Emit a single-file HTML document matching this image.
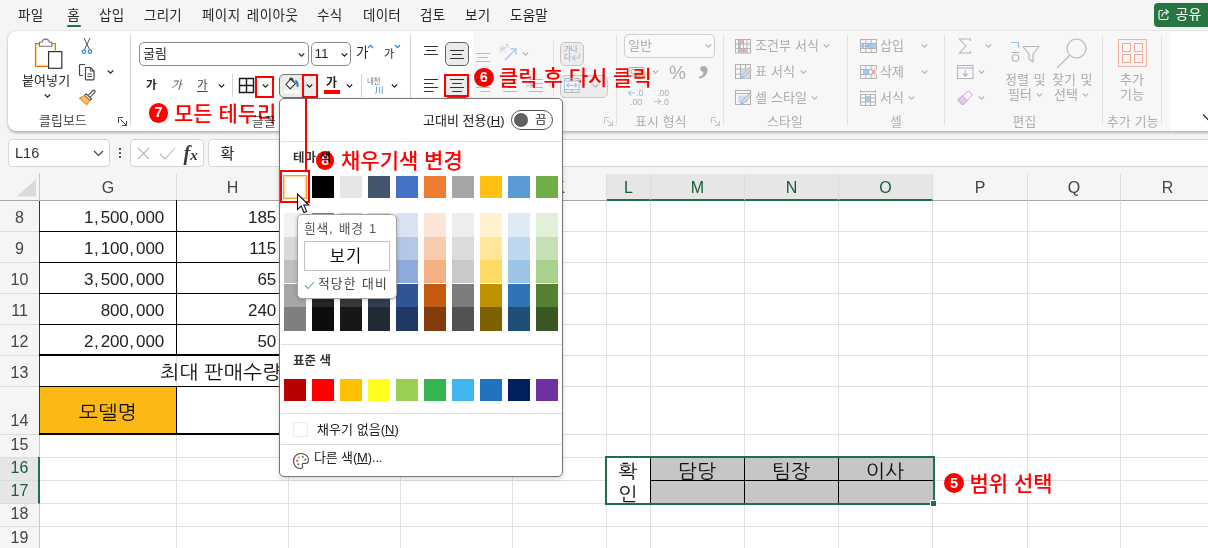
<!DOCTYPE html>
<html lang="ko">
<head>
<meta charset="utf-8">
<title>Excel</title>
<style>
*{box-sizing:border-box;margin:0;padding:0}
html,body{width:1208px;height:548px;overflow:hidden;background:#f5f5f5}
body{position:relative;font-family:"Liberation Sans","Noto Sans CJK KR",sans-serif;font-size:13px;color:#242424}
.abs{position:absolute}
.t{position:absolute;white-space:nowrap;line-height:1}
/* tabs */
#tabs .t{font-size:13.5px;top:8.6px;color:#262626;letter-spacing:.25px;word-spacing:2px}
/* ribbon */
#ribbon{position:absolute;left:8px;top:30.5px;width:1210px;height:100px;background:#fff;border-radius:8px;box-shadow:0 1.5px 3px rgba(0,0,0,.26),0 0 1px rgba(0,0,0,.2)}
.sep{position:absolute;width:1px;background:#d4d4d4}
.glabel{position:absolute;font-size:12.8px;letter-spacing:.2px;color:#444;white-space:nowrap;line-height:1}
.dim{color:#b4b4b4}
/* sheet */
#sheet{position:absolute;left:0;top:173px;width:1208px;height:375px;background:linear-gradient(#f5f5f5 0,#f5f5f5 27px,#fff 27px);overflow:hidden}
.ch{position:absolute;top:1px;height:27px;background:#f5f5f5;border-right:1px solid #dcdcdc;border-bottom:1px solid #a6a6a6;font-size:16px;color:#444;text-align:center;line-height:28.5px}
.ch.sel{background:#e6e6e6;color:#185c37;border-bottom:2px solid #1e7145}
.rh{position:absolute;left:0;width:40px;background:#f5f5f5;border-bottom:1px solid #dcdcdc;border-right:1px solid #c8c8c8;font-size:16px;color:#444;text-align:center}
.rh.sel{background:#e6e6e6;color:#185c37;border-right:2px solid #1e7145}
.vl{position:absolute;width:1px;background:#e1e1e1;top:27px;bottom:0}
.hl{position:absolute;height:1px;background:#e1e1e1;left:40px;right:0}
.cell{transform:scaleX(1.08);position:absolute;font-family:"NanumGothic","Noto Sans CJK KR",sans-serif;font-size:16px;color:#111;white-space:nowrap;line-height:1}
.bk{position:absolute;background:#000}
.num{transform:none;font-family:"Liberation Sans",sans-serif;font-size:17px;letter-spacing:-.15px;color:#222;margin-top:1.2px}
.cm{padding:0 2.2px 0 .7px}
.red{color:#ff0000;font-weight:500;font-family:"Liberation Sans","Noto Sans CJK KR",sans-serif}
.bd{border-radius:50%;background:#ff0000;color:#fff;font-weight:bold;font-size:14.5px;text-align:center;font-family:"Liberation Sans",sans-serif}
</style>
</head>
<body>
<!-- TAB BAR -->
<div id="tabs">
<span class="t" style="left:18px">파일</span>
<span class="t" style="left:67.3px">홈</span>
<div class="abs" style="left:67.3px;top:25.2px;width:13.5px;height:2px;background:#1e7145;border-radius:1px"></div>
<span class="t" style="left:99px">삽입</span>
<span class="t" style="left:144px">그리기</span>
<span class="t" style="left:202px;letter-spacing:.45px">페이지 레이아웃</span>
<span class="t" style="left:317px">수식</span>
<span class="t" style="left:363px">데이터</span>
<span class="t" style="left:420px">검토</span>
<span class="t" style="left:465px">보기</span>
<span class="t" style="left:510px">도움말</span>
</div>
<div class="abs" id="share" style="left:1154px;top:3px;width:70px;height:24px;background:#277641;border-radius:4px;color:#fff;font-size:14px;line-height:23px;padding-left:21.5px">공유</div>
<svg class="abs" style="left:1158px;top:8px" width="13" height="13" viewBox="0 0 13 13"><path d="M5 2.5 H2.500 a1.500 1.500 0 0 0 -1.500 1.500 V10 a1.500 1.500 0 0 0 1.500 1.500 H8.500 a1.500 1.500 0 0 0 1.500 -1.500 V8.500" fill="none" stroke="#fff" stroke-width="1.1"/><path d="M4 8.500 C4 5.500 6 4 9 4 M7.500 1.500 L10.500 4 L7.500 6.500" fill="none" stroke="#fff" stroke-width="1.1"/></svg>

<!-- RIBBON -->
<div id="ribbon">
<div class="abs" style="left:465px;top:0;width:697px;height:100px;background:#f7f7f7"></div>
</div>
<div id="rb" class="abs" style="left:0;top:0;width:1208px;height:135px">
<!-- CLIPBOARD -->
<svg class="abs" style="left:33px;top:37px" width="31" height="33" viewBox="0 0 31 33">
 <path d="M22.400 13.500 V6.500 H2.500 V29.400 H15" fill="none" stroke="#e06c0a" stroke-width="1.1"/>
 <path d="M21.300 13.500 V7.600 H3.600 V28.300 H15" fill="none" stroke="#fcd98a" stroke-width="1.2"/>
 <path d="M6.500 9.300 V5.300 H9 C9.500 1 15.800 1 16.300 5.300 H18.800 V9.300 Z" fill="#fff" stroke="#767676" stroke-width="1.1"/>
 <rect x="15.600" y="14.600" width="13.200" height="16.700" fill="#fff" stroke="#333" stroke-width="1.2"/>
</svg>
<span class="t" style="left:22px;top:74px;font-size:13px;letter-spacing:.1px">붙여넣기</span>
<svg class="abs chev" style="left:43px;top:93px" width="9" height="6" viewBox="0 0 9 6"><path d="M1.800 1.500 L4.500 4.200 L7.200 1.500" fill="none" stroke="#2a2a2a" stroke-width="1.250"/></svg>
<!-- scissors -->
<svg class="abs" style="left:80px;top:37px" width="14" height="18" viewBox="0 0 14 18">
 <path d="M4 1 L9.500 12.600 M10 1 L4.500 12.600" stroke="#555" stroke-width="1" fill="none"/>
 <circle cx="4" cy="14.600" r="1.700" fill="none" stroke="#2b8ad8" stroke-width="1.200"/>
 <circle cx="10" cy="14.600" r="1.700" fill="none" stroke="#2b8ad8" stroke-width="1.200"/>
</svg>
<!-- copy -->
<svg class="abs" style="left:78px;top:63px" width="18" height="18" viewBox="0 0 18 18">
 <path d="M5 12.5 H2.5 a1 1 0 0 1 -1 -1 V2.5 a1 1 0 0 1 1 -1 H7" fill="none" stroke="#444" stroke-width="1.2"/>
 <path d="M7.5 4.5 h5 l3.5 3.5 v8 a.8 .8 0 0 1 -.8 .8 h-7 a.8 .8 0 0 1 -.8 -.8 z" fill="#fff" stroke="#444" stroke-width="1.2"/>
 <path d="M12.3 4.7 v3.4 h3.5" fill="none" stroke="#444" stroke-width="1"/>
 <path d="M9.5 11 h4.5 M9.5 13.5 h4.5" stroke="#444" stroke-width="1"/>
</svg>
<svg class="abs chev" style="left:106px;top:69px" width="9" height="6" viewBox="0 0 9 6"><path d="M1.800 1.500 L4.500 4.200 L7.200 1.500" fill="none" stroke="#2a2a2a" stroke-width="1.250"/></svg>
<!-- format painter -->
<svg class="abs" style="left:78px;top:89px" width="18" height="17" viewBox="0 0 18 17">
 <path d="M10.5 6.2 L14.8 1.6 a1.3 1.3 0 0 1 1.9 1.8 L12.5 8" fill="#fff" stroke="#444" stroke-width="1.1"/>
 <path d="M8.2 4.8 L13.6 9.8 L12 11.4 L6.6 6.4 z" fill="#fff" stroke="#444" stroke-width="1.1"/>
 <path d="M6.3 6.6 L11.6 11.6 L8.6 15.6 L1.6 9.4 z" fill="#f7c27a" stroke="#e8912d" stroke-width="1.2"/>
</svg>
<span class="glabel" style="left:39px;top:114.5px">클립보드</span>
<svg class="abs" style="left:118px;top:117px" width="9" height="9" viewBox="0 0 9 9"><path d="M.5 6 V.5 H5 M2.5 2.5 L8 8 M8.5 4 V8.5 H4" fill="none" stroke="#444" stroke-width="1"/></svg>
<div class="sep" style="left:130px;top:35px;height:90px"></div>

<!-- FONT -->
<div class="abs" style="left:139px;top:42px;width:170px;height:24px;border:1px solid #8a8a8a;border-radius:5px;background:#fff"></div>
<span class="t" style="left:143px;top:47px;font-size:13px">굴림</span>
<svg class="abs chev" style="left:297px;top:52px" width="9" height="6" viewBox="0 0 9 6"><path d="M1.800 1.500 L4.500 4.200 L7.200 1.500" fill="none" stroke="#2a2a2a" stroke-width="1.250"/></svg>
<div class="abs" style="left:311px;top:42px;width:40px;height:24px;border:1px solid #8a8a8a;border-radius:5px;background:#fff"></div>
<span class="t" style="left:314.5px;top:47px;font-size:13.5px;letter-spacing:0">11</span>
<svg class="abs chev" style="left:340px;top:52px" width="9" height="6" viewBox="0 0 9 6"><path d="M1.800 1.500 L4.500 4.200 L7.200 1.500" fill="none" stroke="#2a2a2a" stroke-width="1.250"/></svg>
<span class="t" style="left:356px;top:46px;font-size:13.5px">가</span>
<svg class="abs" style="left:367px;top:44px" width="7" height="5" viewBox="0 0 7 5"><path d="M1 4 L3.5 1.3 L6 4" fill="none" stroke="#2b7cd3" stroke-width="1.2"/></svg>
<span class="t" style="left:384px;top:49px;font-size:11px">가</span>
<svg class="abs" style="left:394px;top:44px" width="7" height="5" viewBox="0 0 7 5"><path d="M1 1 L3.5 3.7 L6 1" fill="none" stroke="#2b7cd3" stroke-width="1.2"/></svg>

<span class="t" style="left:146px;top:80px;font-size:11.5px;font-weight:bold">가</span>
<span class="t" style="left:171px;top:80px;font-size:11.5px;font-style:italic;color:#555">가</span>
<span class="t" style="left:197px;top:80px;font-size:11.5px;color:#444;text-decoration:underline;text-underline-offset:2px">가</span>
<svg class="abs chev" style="left:217px;top:83px" width="9" height="6" viewBox="0 0 9 6"><path d="M1.800 1.500 L4.500 4.200 L7.200 1.500" fill="none" stroke="#2a2a2a" stroke-width="1.250"/></svg>
<div class="sep" style="left:232px;top:74px;height:23px"></div>
<svg class="abs" style="left:238px;top:77px" width="17" height="17" viewBox="0 0 17 17"><path d="M1.5 1.5 H15.5 V15.5 H1.5 Z M8.5 1.5 V15.5 M1.5 8.5 H15.5" fill="none" stroke="#1a1a1a" stroke-width="1.4"/></svg>
<svg class="abs chev" style="left:261px;top:83px" width="9" height="6" viewBox="0 0 9 6"><path d="M1.800 1.500 L4.500 4.200 L7.200 1.500" fill="none" stroke="#2a2a2a" stroke-width="1.250"/></svg>
<!-- fill button -->
<div class="abs" style="left:279px;top:74px;width:39px;height:24px;border:1px solid #757575;border-radius:5px;background:#ececec"></div>
<svg class="abs" style="left:284px;top:76px" width="17" height="19" viewBox="0 0 17 19">
 <path d="M6.8 3 L11.4 7.7 L6.2 12.8 L1.9 8.4 Z" fill="#fff" stroke="#333" stroke-width="1.1" stroke-linejoin="round"/>
 <path d="M5.6 4.4 C5.2 2.2 7.8 1.2 8.6 3.2 L9.6 5.8" fill="none" stroke="#333" stroke-width="1.1"/>
 <path d="M11.3 4.6 c2 1.2 2.6 3.4 2.1 6.2" fill="none" stroke="#2b6fc4" stroke-width="1.9"/>
 <rect x="-.8" y="14" width="16" height="3.6" fill="#fff"/>
</svg>
<svg class="abs chev" style="left:305px;top:83px" width="9" height="6" viewBox="0 0 9 6"><path d="M1.800 1.500 L4.500 4.200 L7.200 1.500" fill="none" stroke="#2a2a2a" stroke-width="1.250"/></svg>
<span class="t" style="left:326px;top:77px;font-size:12px;font-weight:bold">가</span>
<div class="abs" style="left:324px;top:90px;width:16px;height:4px;background:#ff0000"></div>
<svg class="abs chev" style="left:345px;top:83px" width="9" height="6" viewBox="0 0 9 6"><path d="M1.800 1.500 L4.500 4.200 L7.200 1.500" fill="none" stroke="#2a2a2a" stroke-width="1.250"/></svg>
<div class="sep" style="left:361px;top:74px;height:23px"></div>
<span class="t" style="left:367px;top:78px;font-size:7.5px;color:#777;letter-spacing:-.3px">내천</span>
<span class="t" style="left:375px;top:86px;font-size:8.5px;color:#2b7cd3">川</span>
<svg class="abs chev" style="left:390px;top:83px" width="9" height="6" viewBox="0 0 9 6"><path d="M1.800 1.500 L4.500 4.200 L7.200 1.500" fill="none" stroke="#2a2a2a" stroke-width="1.250"/></svg>
<span class="glabel" style="left:252px;top:116px">글꼴</span>
<div class="sep" style="left:410px;top:35px;height:90px"></div>
<!-- ALIGN -->
<svg class="abs" style="left:424px;top:46px" width="14" height="9" viewBox="0 0 14 9"><path d="M0 0.5 H14 M2 4.5 H12 M0 8.5 H14" stroke="#333" stroke-width="1.1" fill="none"/></svg>
<div class="abs" style="left:445px;top:42px;width:24px;height:24px;border:1px solid #616161;border-radius:5px;background:#ebebeb"></div>
<svg class="abs" style="left:450px;top:49.5px" width="14" height="9" viewBox="0 0 14 9"><path d="M0 0.5 H14 M2 4.5 H12 M0 8.5 H14" stroke="#333" stroke-width="1.1" fill="none"/></svg>
<svg class="abs" style="left:476px;top:53px" width="14" height="9" viewBox="0 0 14 9"><path d="M0 0.5 H14 M2 4.5 H12 M0 8.5 H14" stroke="#b9b9b9" stroke-width="1.1" fill="none"/></svg>
<svg class="abs" style="left:500px;top:44px" width="18" height="18" viewBox="0 0 18 18"><path d="M5 16 L15.5 5.5 M10.5 5 H16 V10.5" fill="none" stroke="#a9c8ea" stroke-width="1.3"/><text x="0" y="8" font-size="6.5" fill="#aaa" transform="rotate(-40 3 8)" font-family="Liberation Sans,Noto Sans CJK KR,sans-serif">가나</text></svg>
<svg class="abs" style="left:521.0px;top:51px" width="9" height="6" viewBox="0 0 9 6"><path d="M1.800 1.500 L4.500 4.200 L7.200 1.500" fill="none" stroke="#b9b9b9" stroke-width="1.250"/></svg>
<div class="sep" style="left:553px;top:41px;height:55px;background:#e3e3e3"></div>
<div class="abs" style="left:560px;top:42px;width:24px;height:24px;border:1px solid #c4c4c4;border-radius:5px;background:#ececec"></div>
<span class="t" style="left:564px;top:46px;font-size:7.5px;color:#a0a0a0;letter-spacing:-.2px">가나</span><span class="t" style="left:564px;top:54px;font-size:7.5px;color:#a0a0a0">다</span>
<svg class="abs" style="left:571px;top:53px" width="10" height="9" viewBox="0 0 10 9"><path d="M8.5 .5 V3 a2 2 0 0 1 -2 2 H1.5 M4 2.5 L1.5 5 L4 7.5" fill="none" stroke="#a9c8ea" stroke-width="1.2"/></svg>
<svg class="abs" style="left:424px;top:79px" width="14" height="13" viewBox="0 0 14 13"><path d="M0 0.5 H14 M0 4.5 H9.5 M0 8.5 H14 M0 12.5 H9.5" stroke="#333" stroke-width="1.1" fill="none"/></svg>
<div class="abs" style="left:445px;top:75px;width:24px;height:23px;background:#ebebeb;border-bottom:1px solid #616161;border-radius:0 0 4px 4px"></div>
<svg class="abs" style="left:450px;top:79px" width="14" height="13" viewBox="0 0 14 13"><path d="M0 0.5 H14 M2.2 4.5 H11.8 M0 8.5 H14 M2.2 12.5 H11.8" stroke="#333" stroke-width="1.1" fill="none"/></svg>
<svg class="abs" style="left:476px;top:79px" width="14" height="13" viewBox="0 0 14 13"><path d="M0 0.5 H14 M4.5 4.5 H14 M0 8.5 H14 M4.5 12.5 H14" stroke="#b9b9b9" stroke-width="1.1" fill="none"/></svg>
<svg class="abs" style="left:503px;top:79px" width="14" height="13" viewBox="0 0 14 13"><path d="M0 0.5 H14 M5 4.5 H14 M5 8.5 H14 M0 12.5 H14" stroke="#b9b9b9" stroke-width="1.1" fill="none"/></svg>
<svg class="abs" style="left:529px;top:79px" width="14" height="13" viewBox="0 0 14 13"><path d="M0 0.5 H14 M5 4.5 H14 M5 8.5 H14 M0 12.5 H14" stroke="#b9b9b9" stroke-width="1.1" fill="none"/></svg>
<svg class="abs" style="left:526px;top:82px" width="8" height="7" viewBox="0 0 8 7"><path d="M0 3.5 H6 M4 1 L6.5 3.5 L4 6" fill="none" stroke="#a9c8ea" stroke-width="1.1"/></svg>
<div class="abs" style="left:560px;top:75px;width:48px;height:23px;border:1px solid #c9c9c9;border-radius:5px;background:#ececec"></div>

<svg class="abs" style="left:590.5px;top:83px" width="9" height="6" viewBox="0 0 9 6"><path d="M1.800 1.500 L4.500 4.200 L7.200 1.500" fill="none" stroke="#b9b9b9" stroke-width="1.250"/></svg>
<svg class="abs" style="left:604px;top:117px" width="9" height="9" viewBox="0 0 9 9"><path d="M.5 6 V.5 H5 M2.5 2.5 L8 8 M8.5 4 V8.5 H4" fill="none" stroke="#c2c2c2" stroke-width="1"/></svg>
<div class="sep" style="left:616px;top:35px;height:90px;background:#e3e3e3"></div>
<svg class="abs" style="left:636px;top:70px" width="11" height="9" viewBox="0 0 11 9"><ellipse cx="5.500" cy="4.500" rx="4.500" ry="3.500" fill="#f6d9a8" stroke="#e9b96c" stroke-width=".8"/></svg>
<!-- NUMBER -->
<div class="abs" style="left:624px;top:34px;width:91px;height:24px;border:1px solid #cfcfcf;border-radius:5px;background:#f9f9f9"></div>
<span class="t" style="left:628px;top:39px;font-size:13px;color:#adadad">일반</span>
<svg class="abs" style="left:704.0px;top:43px" width="9" height="6" viewBox="0 0 9 6"><path d="M1.800 1.500 L4.500 4.200 L7.200 1.500" fill="none" stroke="#b9b9b9" stroke-width="1.250"/></svg>

<svg class="abs" style="left:650.5px;top:69px" width="9" height="6" viewBox="0 0 9 6"><path d="M1.800 1.500 L4.500 4.200 L7.200 1.500" fill="none" stroke="#b9b9b9" stroke-width="1.250"/></svg>
<span class="t" style="left:669px;top:63px;font-size:19px;color:#adadad">%</span>
<span class="t" style="left:698.5px;top:36px;font-size:43px;color:#adadad;font-family:'Liberation Serif',serif;font-weight:bold">,</span>
<svg class="abs" style="left:627px;top:89px" width="18" height="17" viewBox="0 0 18 17"><path d="M1.5 4 H8 M4 1.5 L1.5 4 L4 6.5" fill="none" stroke="#a9c8ea" stroke-width="1.1"/><text x="9" y="7" font-size="8.8" fill="#adadad" font-family="Liberation Sans,sans-serif">.0</text><text x="3" y="15.5" font-size="8.8" fill="#adadad" font-family="Liberation Sans,sans-serif">.00</text></svg>
<svg class="abs" style="left:653px;top:89px" width="18" height="17" viewBox="0 0 18 17"><text x="4" y="7" font-size="8.8" fill="#adadad" font-family="Liberation Sans,sans-serif">.00</text><path d="M1 12.5 H7.5 M5 10 L7.5 12.5 L5 15" fill="none" stroke="#a9c8ea" stroke-width="1.1"/><text x="8.5" y="15.5" font-size="8.8" fill="#adadad" font-family="Liberation Sans,sans-serif">.0</text></svg>
<span class="glabel" style="left:635px;top:115.5px;color:#adadad">표시 형식</span>
<svg class="abs" style="left:711px;top:117px" width="9" height="9" viewBox="0 0 9 9"><path d="M.5 6 V.5 H5 M2.5 2.5 L8 8 M8.5 4 V8.5 H4" fill="none" stroke="#c2c2c2" stroke-width="1"/></svg>
<div class="sep" style="left:723px;top:35px;height:90px;background:#e3e3e3"></div>
<!-- STYLES -->
<svg class="abs" style="left:735px;top:38.500px" width="17" height="15" viewBox="0 0 17 15"><rect x="3.800" y="1" width="4.700" height="3.800" fill="#f4a9b0"/><rect x="3.800" y="5" width="2" height="4.500" fill="#9cc3ee"/><rect x="3.800" y="9.700" width="8" height="3.800" fill="#f4a9b0"/><rect x=".5" y=".5" width="15" height="13.500" fill="none" stroke="#b3b3b3"/><path d="M3.500 .5 V14 M8.500 .5 V14 M12 .5 V14 M.5 5 H15.500 M.5 9.500 H15.500" stroke="#b3b3b3" fill="none"/></svg>
<span class="t" style="left:755px;top:39px;font-size:13px;color:#adadad;letter-spacing:0;word-spacing:.5px">조건부 서식</span>
<svg class="abs" style="left:822.0px;top:43px" width="9" height="6" viewBox="0 0 9 6"><path d="M1.800 1.500 L4.500 4.200 L7.200 1.500" fill="none" stroke="#b9b9b9" stroke-width="1.250"/></svg>
<svg class="abs" style="left:735px;top:64px" width="17" height="16" viewBox="0 0 17 16"><rect x=".5" y=".5" width="15" height="14" fill="none" stroke="#b0b0b0"/><path d="M.5 5 H15.5 M.5 10 H15.5 M5.5 .5 V14.5 M10.5 .5 V14.5" stroke="#b0b0b0" fill="none"/><rect x="6" y="5.5" width="9" height="9" fill="#c9dcf2"/><path d="M14.5 3.5 L7 11 L5 14.8 L9 13 L16.3 5.5 Z" fill="#dcdcdc" stroke="#a8a8a8" stroke-width=".8"/><path d="M5 15 q2 .8 4 -1.8 l-2 -2 q-2.4 1.2 -2 3.8z" fill="#9cc3ee"/></svg>
<span class="t" style="left:755px;top:65px;font-size:13px;color:#adadad;letter-spacing:0;word-spacing:.5px">표 서식</span>
<svg class="abs" style="left:798.5px;top:69px" width="9" height="6" viewBox="0 0 9 6"><path d="M1.800 1.500 L4.500 4.200 L7.200 1.500" fill="none" stroke="#b9b9b9" stroke-width="1.250"/></svg>
<svg class="abs" style="left:735px;top:90px" width="17" height="16" viewBox="0 0 17 16"><rect x=".5" y=".5" width="15" height="14" fill="none" stroke="#b0b0b0"/><path d="M.5 3.5 H15.5" stroke="#b0b0b0"/><rect x="3" y="5.5" width="10" height="7" fill="#c9dcf2"/><path d="M14.5 3.5 L7 11 L5 14.8 L9 13 L16.3 5.5 Z" fill="#dcdcdc" stroke="#a8a8a8" stroke-width=".8"/><path d="M5 15 q2 .8 4 -1.8 l-2 -2 q-2.4 1.2 -2 3.8z" fill="#9cc3ee"/></svg>
<span class="t" style="left:755px;top:91px;font-size:13px;color:#adadad;letter-spacing:0;word-spacing:.5px">셀 스타일</span>
<svg class="abs" style="left:810.0px;top:95px" width="9" height="6" viewBox="0 0 9 6"><path d="M1.800 1.500 L4.500 4.200 L7.200 1.500" fill="none" stroke="#b9b9b9" stroke-width="1.250"/></svg>
<span class="glabel" style="left:767px;top:115.5px;color:#adadad">스타일</span>
<div class="sep" style="left:847px;top:35px;height:90px;background:#e3e3e3"></div>
<!-- CELLS -->
<svg class="abs" style="left:859.5px;top:39px" width="17" height="14" viewBox="0 0 17 14"><rect x=".5" y=".5" width="16" height="13" fill="none" stroke="#b3b3b3"/><path d="M5.800 .5 V13.500 M11.100 .5 V13.500 M.5 4.500 H16.500 M.5 9.500 H16.500" stroke="#b3b3b3" fill="none"/><rect x="6.300" y="5" width="9.700" height="4" fill="#a9c8ea"/><path d="M10 7 H1.500 M3.800 4.800 L1.500 7 L3.800 9.200" fill="none" stroke="#7fb0e6" stroke-width="1.1"/></svg>
<span class="t" style="left:880px;top:39px;font-size:13px;color:#adadad">삽입</span>
<svg class="abs" style="left:920.0px;top:43px" width="9" height="6" viewBox="0 0 9 6"><path d="M1.800 1.500 L4.500 4.200 L7.200 1.500" fill="none" stroke="#b9b9b9" stroke-width="1.250"/></svg>
<svg class="abs" style="left:859.5px;top:65px" width="17" height="14" viewBox="0 0 17 14"><path d="M.5 .5 H16.500 M.5 13.500 H16.500 M.5 .5 V13.500 M5.800 .5 V13.500 M11.100 .5 V4 M11.100 10 V13.500 M16.500 .5 V4 M16.500 10 V13.500 M.5 4.500 H11 M.5 9.500 H11" stroke="#b3b3b3" fill="none"/><rect x="3.500" y="4.500" width="5.500" height="5" fill="#a9c8ea" stroke="#8fb8e6" stroke-width=".8"/><path d="M11.300 4.300 L16 9.700 M16 4.300 L11.300 9.700" stroke="#f08a86" stroke-width="1.200"/></svg>
<span class="t" style="left:880px;top:65px;font-size:13px;color:#adadad">삭제</span>
<svg class="abs" style="left:920.0px;top:69px" width="9" height="6" viewBox="0 0 9 6"><path d="M1.800 1.500 L4.500 4.200 L7.200 1.500" fill="none" stroke="#b9b9b9" stroke-width="1.250"/></svg>
<svg class="abs" style="left:860px;top:90px" width="17" height="16" viewBox="0 0 17 16"><path d="M.5 .300 V3 M15.500 .300 V3 M.5 1.600 H15.500" stroke="#8fb8e6" fill="none"/><rect x=".5" y="4.500" width="15" height="11" fill="none" stroke="#b3b3b3"/><path d="M5.500 4.500 V15.500 M10.500 4.500 V15.500 M.5 8 H15.500 M.5 12 H15.500" stroke="#b3b3b3" fill="none"/><rect x="6" y="6" width="4" height="5.500" fill="#a9c8ea"/></svg>
<span class="t" style="left:880px;top:91px;font-size:13px;color:#adadad">서식</span>
<svg class="abs" style="left:907.0px;top:95px" width="9" height="6" viewBox="0 0 9 6"><path d="M1.800 1.500 L4.500 4.200 L7.200 1.500" fill="none" stroke="#b9b9b9" stroke-width="1.250"/></svg>
<span class="glabel" style="left:890px;top:115.5px;color:#adadad">셀</span>
<div class="sep" style="left:944px;top:35px;height:90px;background:#e3e3e3"></div>
<!-- EDIT -->
<svg class="abs" style="left:958px;top:38px" width="14" height="16" viewBox="0 0 14 16"><path d="M12.5 3 V1 H1.5 L8 8 L1.5 15 H12.5 V13" fill="none" stroke="#b5b5b5" stroke-width="1.1"/></svg>
<svg class="abs" style="left:983.5px;top:43px" width="9" height="6" viewBox="0 0 9 6"><path d="M1.800 1.500 L4.500 4.200 L7.200 1.500" fill="none" stroke="#b9b9b9" stroke-width="1.250"/></svg>
<svg class="abs" style="left:957px;top:65px" width="17" height="14" viewBox="0 0 17 14"><rect x=".5" y=".5" width="15.500" height="13" fill="none" stroke="#b3b3b3"/><path d="M.5 3 H16" stroke="#b3b3b3"/><path d="M8.300 5 V11 M5.800 8.700 L8.300 11.200 L10.800 8.700" fill="none" stroke="#8fbce9" stroke-width="1.1"/></svg>
<svg class="abs" style="left:977.0px;top:69px" width="9" height="6" viewBox="0 0 9 6"><path d="M1.800 1.500 L4.500 4.200 L7.200 1.500" fill="none" stroke="#b9b9b9" stroke-width="1.250"/></svg>
<svg class="abs" style="left:957px;top:90px" width="17" height="16" viewBox="0 0 17 16"><path d="M11.500 .8 L15.400 4.800 L5.700 15 L.7 10 Z" fill="#fbf3fc" stroke="#cfa3da" stroke-width="1" stroke-linejoin="round"/><path d="M5.300 5.700 L10.300 10.600 L5.700 15 L.7 10 Z" fill="#e6c9ec" stroke="#cfa3da" stroke-width="1" stroke-linejoin="round"/></svg>
<svg class="abs" style="left:977.0px;top:95px" width="9" height="6" viewBox="0 0 9 6"><path d="M1.800 1.500 L4.500 4.200 L7.200 1.500" fill="none" stroke="#b9b9b9" stroke-width="1.250"/></svg>
<svg class="abs" style="left:1009px;top:41px" width="31" height="24" viewBox="0 0 31 24"><path d="M2 1.5 H9.5 V7" fill="none" stroke="#9cc3ee" stroke-width="1.2"/><circle cx="6.5" cy="17" r="3.3" fill="none" stroke="#b5b5b5" stroke-width="1.1"/><path d="M2.5 11.5 H10.5" stroke="#b5b5b5" stroke-width="1.1"/><path d="M14 5.5 H30 L24 13 V21 L20 18 V13 Z" fill="none" stroke="#b5b5b5" stroke-width="1.1" stroke-linejoin="round"/></svg>
<span class="t" style="left:1005px;top:73px;font-size:13px;color:#adadad;word-spacing:1px">정렬 및</span>
<span class="t" style="left:1008px;top:88px;font-size:13px;color:#adadad">필터</span>
<svg class="abs" style="left:1034.5px;top:92px" width="9" height="6" viewBox="0 0 9 6"><path d="M1.800 1.500 L4.500 4.200 L7.200 1.500" fill="none" stroke="#b9b9b9" stroke-width="1.250"/></svg>
<svg class="abs" style="left:1056px;top:38px" width="32" height="31" viewBox="0 0 32 31"><circle cx="20.5" cy="10.5" r="9.5" fill="none" stroke="#b5b5b5" stroke-width="1.1"/><path d="M13.5 17.5 L1 30" stroke="#b5b5b5" stroke-width="1.1"/></svg>
<span class="t" style="left:1052px;top:73px;font-size:13px;color:#adadad;word-spacing:1px">찾기 및</span>
<span class="t" style="left:1054px;top:88px;font-size:13px;color:#adadad">선택</span>
<svg class="abs" style="left:1081.0px;top:92px" width="9" height="6" viewBox="0 0 9 6"><path d="M1.800 1.500 L4.500 4.200 L7.200 1.500" fill="none" stroke="#b9b9b9" stroke-width="1.250"/></svg>
<span class="glabel" style="left:1012.5px;top:115.5px;color:#adadad">편집</span>
<div class="sep" style="left:1102px;top:35px;height:90px;background:#e3e3e3"></div>
<!-- ADDINS -->
<svg class="abs" style="left:1118px;top:39px" width="29" height="28" viewBox="0 0 29 28"><rect x=".5" y=".5" width="28" height="27" fill="none" stroke="#f0b5a3" stroke-width="1.1"/><rect x="4.500" y="4.500" width="8" height="8" fill="none" stroke="#eeaa96" stroke-width="1"/><rect x="16.500" y="4.500" width="8" height="8" fill="none" stroke="#eeaa96" stroke-width="1"/><rect x="4.500" y="15.500" width="8" height="8" fill="none" stroke="#eeaa96" stroke-width="1"/><rect x="16.500" y="15.500" width="8" height="8" fill="none" stroke="#eeaa96" stroke-width="1"/></svg>
<span class="t" style="left:1120px;top:73px;font-size:13px;color:#adadad">추가</span>
<span class="t" style="left:1120px;top:88px;font-size:13px;color:#adadad">기능</span>
<span class="glabel" style="left:1107px;top:115.5px;color:#adadad">추가 기능</span>
<div class="sep" style="left:1161px;top:35px;height:90px;background:#e3e3e3"></div>
<svg class="abs" style="left:1202px;top:112.500px" width="12" height="10" viewBox="0 0 12 10"><path d="M1 1.5 L8 8.5 L15 1.5" fill="none" stroke="#333" stroke-width="1.3"/></svg>

</div>

<!-- FORMULA BAR -->
<div id="fbar">
<div class="abs" style="left:8px;top:139px;width:102px;height:28px;background:#fff;border:1px solid #d6d6d6;border-radius:4px"></div>
<span class="t" style="left:15px;top:146px;font-size:14.5px;color:#333">L16</span>
<svg class="abs" style="left:93px;top:150px" width="11" height="7" viewBox="0 0 11 7"><path d="M1 1 L5.5 5.5 L10 1" fill="none" stroke="#444" stroke-width="1.2"/></svg>
<div class="abs" style="left:119px;top:148px;width:2px;height:2px;background:#555;box-shadow:0 4px 0 #555,0 8px 0 #555"></div>
<div class="abs" style="left:130px;top:139px;width:74px;height:28px;background:#fff;border:1px solid #d6d6d6;border-radius:4px"></div>
<svg class="abs" style="left:137px;top:147px" width="13" height="13" viewBox="0 0 13 13"><path d="M1 1 L12 12 M12 1 L1 12" stroke="#b8b8b8" stroke-width="1.1"/></svg>
<svg class="abs" style="left:159px;top:147px" width="17" height="13" viewBox="0 0 17 13"><path d="M1 7 L6 12 L16 1" fill="none" stroke="#b8b8b8" stroke-width="1.1"/></svg>
<span class="t" style="left:183.5px;top:142.5px;font-size:20px;font-style:italic;font-weight:bold;font-family:'Liberation Serif',serif;color:#3a3a3a">f<span style="font-size:15px">x</span></span>
<div class="abs" style="left:208px;top:139px;width:1010px;height:28px;background:#fff;border:1px solid #d6d6d6;border-radius:4px"></div>
<span class="t" style="left:220.5px;top:145.5px;font-size:15px;color:#222">확</span>
</div>

<!-- SHEET -->
<div id="sheet">
<div class="hl" style="top:58px"></div><div class="hl" style="top:89px"></div><div class="hl" style="top:120px"></div><div class="hl" style="top:151px"></div><div class="hl" style="top:182px"></div><div class="hl" style="top:213px"></div><div class="hl" style="top:261px"></div><div class="hl" style="top:284px"></div><div class="hl" style="top:307px"></div><div class="hl" style="top:330px"></div><div class="hl" style="top:353px"></div><div class="hl" style="top:376px"></div>
<div class="vl" style="left:176px"></div><div class="vl" style="left:288px"></div><div class="vl" style="left:400px"></div><div class="vl" style="left:512px"></div><div class="vl" style="left:606px"></div><div class="vl" style="left:650px"></div><div class="vl" style="left:744px"></div><div class="vl" style="left:838px"></div><div class="vl" style="left:932px"></div><div class="vl" style="left:1027px"></div><div class="vl" style="left:1120px"></div><div class="vl" style="left:1214px"></div>
<div class="abs" style="left:0;top:0;width:40px;height:28px;background:#f5f5f5;border-bottom:1px solid #a6a6a6;border-right:1px solid #c8c8c8"></div><svg class="abs" style="left:17px;top:6px" width="20" height="18" viewBox="0 0 20 18"><path d="M19 0 V17.5 H0 Z" fill="#dadada"/></svg>
<div class="ch" style="left:40px;width:137px">G</div><div class="ch" style="left:177px;width:112px">H</div><div class="ch" style="left:289px;width:112px">I</div><div class="ch" style="left:401px;width:112px">J</div><div class="ch" style="left:513px;width:94px">K</div><div class="ch sel" style="left:607px;width:44px">L</div><div class="ch sel" style="left:651px;width:94px">M</div><div class="ch sel" style="left:745px;width:94px">N</div><div class="ch sel" style="left:839px;width:94px">O</div><div class="ch" style="left:933px;width:95px">P</div><div class="ch" style="left:1028px;width:93px">Q</div><div class="ch" style="left:1121px;width:94px">R</div>
<div class="rh" style="top:28px;height:31px"><span class="t" style="left:0;width:39px;text-align:center;top:9.3px">8</span></div><div class="rh" style="top:59px;height:31px"><span class="t" style="left:0;width:39px;text-align:center;top:9.3px">9</span></div><div class="rh" style="top:90px;height:31px"><span class="t" style="left:0;width:39px;text-align:center;top:9.3px">10</span></div><div class="rh" style="top:121px;height:31px"><span class="t" style="left:0;width:39px;text-align:center;top:9.3px">11</span></div><div class="rh" style="top:152px;height:31px"><span class="t" style="left:0;width:39px;text-align:center;top:9.3px">12</span></div><div class="rh" style="top:183px;height:31px"><span class="t" style="left:0;width:39px;text-align:center;top:9.3px">13</span></div><div class="rh" style="top:214px;height:48px"><span class="t" style="left:0;width:39px;text-align:center;top:26.3px">14</span></div><div class="rh" style="top:262px;height:23px"><span class="t" style="left:0;width:39px;text-align:center;top:2.3px">15</span></div><div class="rh sel" style="top:285px;height:23px"><span class="t" style="left:0;width:39px;text-align:center;top:2.3px">16</span></div><div class="rh sel" style="top:308px;height:23px"><span class="t" style="left:0;width:39px;text-align:center;top:2.3px">17</span></div><div class="rh" style="top:331px;height:23px"><span class="t" style="left:0;width:39px;text-align:center;top:2.3px">18</span></div><div class="rh" style="top:354px;height:23px"><span class="t" style="left:0;width:39px;text-align:center;top:3.3px">19</span></div>
<div class="abs" style="left:38px;top:284px;width:2px;height:46px;background:#1e7145"></div><div class="bk" style="left:39px;top:28px;width:1px;height:234px;background:#333"></div><div class="bk" style="left:176px;top:27px;width:1px;height:156px"></div><div class="bk" style="left:176px;top:213px;width:1px;height:48px"></div><div class="bk" style="left:39px;top:58px;width:260px;height:1px"></div><div class="bk" style="left:39px;top:89px;width:260px;height:1px"></div><div class="bk" style="left:39px;top:120px;width:260px;height:1px"></div><div class="bk" style="left:39px;top:151px;width:260px;height:1px"></div><div class="bk" style="left:39px;top:181px;width:260px;height:2px"></div><div class="bk" style="left:39px;top:213px;width:260px;height:1px"></div><div class="bk" style="left:39px;top:260px;width:260px;height:2px"></div>
<div class="abs" style="left:40px;top:214px;width:136px;height:46px;background:#fdb913"></div>
<span class="cell num" style="right:1044px;top:35px">1<span class="cm">,</span>500<span class="cm">,</span>000</span><span class="cell num" style="right:932px;top:35px">185</span>
<span class="cell num" style="right:1044px;top:66px">1<span class="cm">,</span>100<span class="cm">,</span>000</span><span class="cell num" style="right:932px;top:66px">115</span>
<span class="cell num" style="right:1044px;top:97px">3<span class="cm">,</span>500<span class="cm">,</span>000</span><span class="cell num" style="right:932px;top:97px">65</span>
<span class="cell num" style="right:1044px;top:128px">800<span class="cm">,</span>000</span><span class="cell num" style="right:932px;top:128px">240</span>
<span class="cell num" style="right:1044px;top:159px">2<span class="cm">,</span>200<span class="cm">,</span>000</span><span class="cell num" style="right:932px;top:159px">50</span>
<span class="cell" style="left:160px;top:190px;font-size:19px;transform-origin:0 0">최대 판매수량</span>
<span class="cell" style="left:81px;top:230px;font-size:19px">모델명</span>
<div class="abs" style="left:607px;top:285px;width:43px;height:46px;background:#fff"></div><div class="abs" style="left:651px;top:285px;width:282px;height:46px;background:#c6c6c6"></div>
<div class="bk" style="left:650px;top:285px;width:1px;height:46px"></div><div class="bk" style="left:744px;top:285px;width:1px;height:46px"></div><div class="bk" style="left:838px;top:285px;width:1px;height:46px"></div><div class="bk" style="left:650px;top:307px;width:283px;height:1px"></div><div class="bk" style="left:607px;top:284px;width:326px;height:1px"></div><div class="bk" style="left:607px;top:330px;width:326px;height:1px"></div><span class="cell" style="left:618.5px;top:288.5px;font-size:19px">확</span><span class="cell" style="left:618.5px;top:311.5px;font-size:19px">인</span>
<span class="cell" style="left:678px;width:38px;text-align:center;top:288.5px;font-size:19px">담당</span><span class="cell" style="left:772px;width:38px;text-align:center;top:288.5px;font-size:19px">팀장</span><span class="cell" style="left:866px;width:38px;text-align:center;top:288.5px;font-size:19px">이사</span>
<div class="abs" style="left:605px;top:283px;width:330px;height:49px;border:2px solid #1e7145"></div><div class="abs" style="left:930px;top:327px;width:7px;height:7px;background:#1e7145;border:1px solid #fff"></div>
</div>

<!-- POPUP -->
<div id="popup" class="abs" style="left:279px;top:98px;width:284px;height:379px;background:#fff;border:1px solid #767676;border-radius:5px;box-shadow:0 2px 5px rgba(0,0,0,.16)">
<div class="abs" style="left:1px;top:0;width:0;height:0">
<span class="t" style="left:142px;top:15px;font-size:13px;color:#222;letter-spacing:0">고대비 전용(<u>H</u>)</span>
<div class="abs" style="left:230px;top:11px;width:42px;height:20px;border:1px solid #555;border-radius:10px"></div><div class="abs" style="left:233px;top:14px;width:14px;height:14px;border-radius:7px;background:#616161"></div><span class="t" style="left:254px;top:15px;font-size:12.5px;color:#333">끔</span>
<div class="abs" style="left:0px;top:42px;width:281px;height:1px;background:#e0e0e0"></div>
<span class="t" style="left:12px;top:53px;font-size:12.5px;font-weight:bold;color:#333">테마 색</span>
<div class="abs" style="left:2px;top:76px;width:24px;height:24px;background:#fff;border:1px solid #f0a336;box-shadow:inset 0 0 0 1.3px #fbd9a3"></div><div class="abs" style="left:31px;top:77px;width:22px;height:22px;background:#000000"></div><div class="abs" style="left:59px;top:77px;width:22px;height:22px;background:#e7e6e6"></div><div class="abs" style="left:87px;top:77px;width:22px;height:22px;background:#44546a"></div><div class="abs" style="left:115px;top:77px;width:22px;height:22px;background:#4472c4"></div><div class="abs" style="left:143px;top:77px;width:22px;height:22px;background:#ed7d31"></div><div class="abs" style="left:171px;top:77px;width:22px;height:22px;background:#a5a5a5"></div><div class="abs" style="left:199px;top:77px;width:22px;height:22px;background:#ffc011"></div><div class="abs" style="left:227px;top:77px;width:22px;height:22px;background:#5b9bd5"></div><div class="abs" style="left:255px;top:77px;width:22px;height:22px;background:#70ad47"></div>
<div class="abs" style="left:3px;top:114px;width:22px;height:23.9px;background:#f2f2f2"></div><div class="abs" style="left:3px;top:137.6px;width:22px;height:23.9px;background:#d9d9d9"></div><div class="abs" style="left:3px;top:160.60000000000002px;width:22px;height:23.9px;background:#bfbfbf"></div><div class="abs" style="left:3px;top:184.8px;width:22px;height:23.9px;background:#a6a6a6"></div><div class="abs" style="left:3px;top:208.4px;width:22px;height:23.9px;background:#7f7f7f"></div>
<div class="abs" style="left:31px;top:114px;width:22px;height:23.9px;background:#7f7f7f"></div><div class="abs" style="left:31px;top:137.6px;width:22px;height:23.9px;background:#595959"></div><div class="abs" style="left:31px;top:160.60000000000002px;width:22px;height:23.9px;background:#404040"></div><div class="abs" style="left:31px;top:184.8px;width:22px;height:23.9px;background:#262626"></div><div class="abs" style="left:31px;top:208.4px;width:22px;height:23.9px;background:#0d0d0d"></div>
<div class="abs" style="left:59px;top:114px;width:22px;height:23.9px;background:#d0cece"></div><div class="abs" style="left:59px;top:137.6px;width:22px;height:23.9px;background:#aeaaaa"></div><div class="abs" style="left:59px;top:160.60000000000002px;width:22px;height:23.9px;background:#767171"></div><div class="abs" style="left:59px;top:184.8px;width:22px;height:23.9px;background:#3b3838"></div><div class="abs" style="left:59px;top:208.4px;width:22px;height:23.9px;background:#181717"></div>
<div class="abs" style="left:87px;top:114px;width:22px;height:23.9px;background:#d6dce5"></div><div class="abs" style="left:87px;top:137.6px;width:22px;height:23.9px;background:#adb9ca"></div><div class="abs" style="left:87px;top:160.60000000000002px;width:22px;height:23.9px;background:#8497b0"></div><div class="abs" style="left:87px;top:184.8px;width:22px;height:23.9px;background:#333f50"></div><div class="abs" style="left:87px;top:208.4px;width:22px;height:23.9px;background:#222a35"></div>
<div class="abs" style="left:115px;top:114px;width:22px;height:23.9px;background:#dae3f3"></div><div class="abs" style="left:115px;top:137.6px;width:22px;height:23.9px;background:#b4c7e7"></div><div class="abs" style="left:115px;top:160.60000000000002px;width:22px;height:23.9px;background:#8faadc"></div><div class="abs" style="left:115px;top:184.8px;width:22px;height:23.9px;background:#2f5597"></div><div class="abs" style="left:115px;top:208.4px;width:22px;height:23.9px;background:#203864"></div>
<div class="abs" style="left:143px;top:114px;width:22px;height:23.9px;background:#fbe5d6"></div><div class="abs" style="left:143px;top:137.6px;width:22px;height:23.9px;background:#f8cbad"></div><div class="abs" style="left:143px;top:160.60000000000002px;width:22px;height:23.9px;background:#f4b183"></div><div class="abs" style="left:143px;top:184.8px;width:22px;height:23.9px;background:#c55a11"></div><div class="abs" style="left:143px;top:208.4px;width:22px;height:23.9px;background:#843c0c"></div>
<div class="abs" style="left:171px;top:114px;width:22px;height:23.9px;background:#ededed"></div><div class="abs" style="left:171px;top:137.6px;width:22px;height:23.9px;background:#dbdbdb"></div><div class="abs" style="left:171px;top:160.60000000000002px;width:22px;height:23.9px;background:#c9c9c9"></div><div class="abs" style="left:171px;top:184.8px;width:22px;height:23.9px;background:#7c7c7c"></div><div class="abs" style="left:171px;top:208.4px;width:22px;height:23.9px;background:#525252"></div>
<div class="abs" style="left:199px;top:114px;width:22px;height:23.9px;background:#fff2cc"></div><div class="abs" style="left:199px;top:137.6px;width:22px;height:23.9px;background:#ffe699"></div><div class="abs" style="left:199px;top:160.60000000000002px;width:22px;height:23.9px;background:#ffd966"></div><div class="abs" style="left:199px;top:184.8px;width:22px;height:23.9px;background:#bf9000"></div><div class="abs" style="left:199px;top:208.4px;width:22px;height:23.9px;background:#7f6000"></div>
<div class="abs" style="left:227px;top:114px;width:22px;height:23.9px;background:#deebf7"></div><div class="abs" style="left:227px;top:137.6px;width:22px;height:23.9px;background:#bdd7ee"></div><div class="abs" style="left:227px;top:160.60000000000002px;width:22px;height:23.9px;background:#9dc3e6"></div><div class="abs" style="left:227px;top:184.8px;width:22px;height:23.9px;background:#2e75b6"></div><div class="abs" style="left:227px;top:208.4px;width:22px;height:23.9px;background:#1f4e79"></div>
<div class="abs" style="left:255px;top:114px;width:22px;height:23.9px;background:#e2f0d9"></div><div class="abs" style="left:255px;top:137.6px;width:22px;height:23.9px;background:#c5e0b4"></div><div class="abs" style="left:255px;top:160.60000000000002px;width:22px;height:23.9px;background:#a9d18e"></div><div class="abs" style="left:255px;top:184.8px;width:22px;height:23.9px;background:#548235"></div><div class="abs" style="left:255px;top:208.4px;width:22px;height:23.9px;background:#385723"></div>
<div class="abs" style="left:0px;top:245px;width:281px;height:1px;background:#e0e0e0"></div>
<span class="t" style="left:12px;top:256px;font-size:12.5px;font-weight:bold;color:#333">표준 색</span>
<div class="abs" style="left:3px;top:280px;width:22px;height:22px;background:#b80000"></div><div class="abs" style="left:31px;top:280px;width:22px;height:22px;background:#ff0000"></div><div class="abs" style="left:59px;top:280px;width:22px;height:22px;background:#ffc000"></div><div class="abs" style="left:87px;top:280px;width:22px;height:22px;background:#ffff1f"></div><div class="abs" style="left:115px;top:280px;width:22px;height:22px;background:#9bcf53"></div><div class="abs" style="left:143px;top:280px;width:22px;height:22px;background:#35b44f"></div><div class="abs" style="left:171px;top:280px;width:22px;height:22px;background:#41b5ee"></div><div class="abs" style="left:199px;top:280px;width:22px;height:22px;background:#2272c0"></div><div class="abs" style="left:227px;top:280px;width:22px;height:22px;background:#002060"></div><div class="abs" style="left:255px;top:280px;width:22px;height:22px;background:#7030a0"></div>
<div class="abs" style="left:0px;top:314px;width:281px;height:1px;background:#e0e0e0"></div>
<div class="abs" style="left:12px;top:323px;width:15px;height:15px;border:1px solid #ececec;background:#fff"></div><span class="t" style="left:36px;top:324px;font-size:13px;color:#222;letter-spacing:.05px">채우기 없음(<u>N</u>)</span>
<div class="abs" style="left:0px;top:345px;width:281px;height:1px;background:#e0e0e0"></div>
<svg class="abs" style="left:11px;top:353px" width="18" height="18" viewBox="0 0 18 18"><path d="M9 1.5 c4.2 0 7.5 2.8 7.5 6.3 c0 2.6 -1.8 3.7 -3.6 3.7 h-1.6 c-1 0 -1.4 .9 -.9 1.7 c.8 1.300 0 3.300 -2.100 3.300 c-3.800 0 -6.800 -3.200 -6.800 -7.500 c0 -4.200 3.300 -7.500 7.500 -7.500z" fill="#fff" stroke="#444" stroke-width="1.1"/><circle cx="5.2" cy="8.800" r="1.1" fill="#e23b3b"/><circle cx="7" cy="5.300" r="1.1" fill="#f2a63a"/><circle cx="10.800" cy="4.800" r="1.1" fill="#3aa655"/><circle cx="13.300" cy="7.600" r="1.1" fill="#2b7cd3"/><circle cx="6.4" cy="12.300" r="1.1" fill="#8a4fc4"/></svg><span class="t" style="left:33px;top:352px;font-size:13px;color:#222;letter-spacing:-.15px">다른 색(<u>M</u>)...</span>
<div class="abs" style="left:16px;top:115px;width:100px;height:85px;background:#fff;border:1px solid #a3a3a3;border-radius:5px;box-shadow:0 1px 4px rgba(0,0,0,.2)"></div><span class="t" style="left:23px;top:124px;font-size:12.8px;color:#555;letter-spacing:.75px;word-spacing:1px">흰색, 배경 1</span><div class="abs" style="left:23px;top:142px;width:86px;height:30px;border:1px solid #c2c2c2;background:#fff"></div><span class="t" style="left:22px;top:148.500px;width:86px;text-align:center;font-size:16.5px;color:#111;letter-spacing:1px">보기</span><svg class="abs" style="left:23px;top:182px" width="11" height="9" viewBox="0 0 11 9"><path d="M1 4.500 L4 7.500 L10 1" fill="none" stroke="#5cb868" stroke-width="1.1"/></svg><span class="t" style="left:37px;top:179.200px;font-size:12.8px;color:#444;letter-spacing:1.05px;word-spacing:1px">적당한 대비</span>
</div></div>

<!-- ANNOTATIONS -->
<div id="anno">
<div class="abs" style="left:0;top:0;width:1208px;height:548px;mix-blend-mode:multiply">
<div class="abs bd" style="left:148.85px;top:103.05px;width:19.5px;height:19.5px;line-height:19.5px">7</div><span class="t red" style="left:174px;top:102.8px;font-size:21px">모든 테두리</span>
<div class="abs bd" style="left:474.05px;top:67.55px;width:19.5px;height:19.5px;line-height:19.5px">6</div><span class="t red" style="left:499px;top:67px;font-size:21px">클릭 후 다시 클릭</span>
<div class="abs bd" style="left:315.95px;top:151.25px;width:18.5px;height:18.5px;line-height:18.5px">8</div><span class="t red" style="left:341px;top:150px;font-size:21px">채우기색 변경</span>
<div class="abs bd" style="left:944.1px;top:472.9px;width:20px;height:20px;line-height:20px">5</div><span class="t red" style="left:969.5px;top:472.5px;font-size:21px">범위 선택</span>
</div>
<div class="abs" style="left:255px;top:75.5px;width:19px;height:22.3px;border:2px solid #ff0000"></div><div class="abs" style="left:302px;top:74px;width:16px;height:24px;border:2px solid #ff0000"></div><div class="abs" style="left:444px;top:74px;width:25px;height:23px;border:2px solid #ff0000"></div><div class="abs" style="left:280px;top:170px;width:30px;height:33px;border:2px solid #ff0000"></div><div class="abs" style="left:305px;top:97px;width:2px;height:74px;background:#ff0000"></div>
<svg class="abs" style="left:296px;top:192px" width="15" height="22" viewBox="0 0 15 22"><path d="M1.5 2 V17.500 L5.200 14 L8 20.500 L10.600 19.400 L7.800 13 H12.800 Z" fill="#fff" stroke="#111" stroke-width="1.1"/></svg>
</div>
<div id="top"><svg class="abs" style="left:564px;top:78px" width="16" height="15" viewBox="0 0 16 15"><path d="M.5 3 V.5 H15 V3 M.5 11.500 V14.500 H15 V11.500 M7.800 11.500 V14.500" fill="none" stroke="#b5b5b5" stroke-width="1"/><rect x=".5" y="3" width="14.500" height="8.500" fill="#f2f6fc" stroke="#a9c8ea" stroke-width="1"/><path d="M2.800 7.200 H12.800 M4.800 5.200 L2.800 7.200 L4.800 9.200 M10.800 5.200 L12.800 7.200 L10.800 9.200" fill="none" stroke="#9cc3ee" stroke-width="1.1"/></svg><svg class="abs" style="left:628px;top:67px" width="17" height="10" viewBox="0 0 17 10"><rect x=".5" y=".5" width="15.500" height="8.500" rx="1" fill="none" stroke="#a8a8a8"/><ellipse cx="5" cy="4.700" rx="2" ry="2.400" fill="none" stroke="#a8a8a8"/></svg></div>
</body>
</html>
